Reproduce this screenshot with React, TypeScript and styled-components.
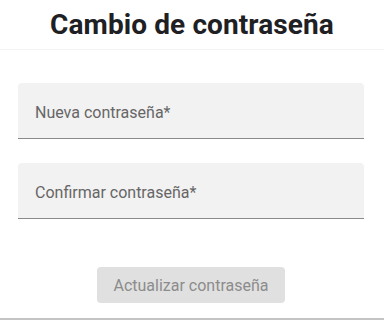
import React, { useState } from 'react';
import styled, { createGlobalStyle } from 'styled-components';

const GlobalStyle = createGlobalStyle`
  html, body {
    margin: 0;
    padding: 0;
    background: #fff;
    font-family: Roboto, "Liberation Sans", Arial, sans-serif;
  }
`;

const Page = styled.div`
  width: 384px;
  height: 329px;
  display: flex;
  flex-direction: column;
  box-sizing: border-box;
`;

const Header = styled.header`
  height: 49px;
  border-bottom: 1px solid #f3f3f3;
  display: flex;
  justify-content: center;
`;

const Title = styled.h1`
  margin: 0;
  font-size: 28px;
  line-height: 50px;
  font-weight: 700;
  color: #1e2024;
  letter-spacing: 0.1px;
`;

const Form = styled.form`
  flex: 1;
  display: flex;
  flex-direction: column;
  padding: 33px 20px 0 18px;
  gap: 24px;
  border-bottom: 2px solid #c4c4c4;
  margin-bottom: 9px;
`;

const Field = styled.label`
  position: relative;
  display: block;
  height: 56px;
  background: #f2f2f2;
  border-radius: 4px 4px 0 0;
  border-bottom: 1px solid #8a8a8a;
  box-sizing: border-box;
`;

const FieldLabel = styled.span`
  position: absolute;
  left: 17px;
  top: 18px;
  font-size: 16px;
  line-height: 23px;
  color: #666;
  pointer-events: none;
`;

const Input = styled.input`
  width: 100%;
  height: 100%;
  border: 0;
  outline: none;
  background: transparent;
  box-sizing: border-box;
  padding: 25px 17px 8px;
  font: inherit;
  font-size: 16px;
`;

const Actions = styled.div`
  display: flex;
  justify-content: center;
  padding-top: 24px;
`;

const Button = styled.button`
  height: 36px;
  width: 188px;
  border: 0;
  border-radius: 4px;
  background: #e0e0e0;
  color: #8c8c8c;
  font-family: inherit;
  font-size: 16px;
  padding: 0;
  cursor: default;
`;

const PasswordField: React.FC<{ label: string; value: string; onChange: (v: string) => void }> = ({ label, value, onChange }) => (
  <Field>
    {!value && <FieldLabel>{label}</FieldLabel>}
    <Input type="password" value={value} onChange={e => onChange(e.target.value)} />
  </Field>
);

const App: React.FC = () => {
  const [pass, setPass] = useState('');
  const [confirm, setConfirm] = useState('');

  return (
    <>
      <GlobalStyle />
      <Page>
        <Header>
          <Title>Cambio de contraseña</Title>
        </Header>
        <Form onSubmit={e => e.preventDefault()}>
          <PasswordField label="Nueva contraseña*" value={pass} onChange={setPass} />
          <PasswordField label="Confirmar contraseña*" value={confirm} onChange={setConfirm} />
          <Actions>
            <Button type="submit" disabled>Actualizar contraseña</Button>
          </Actions>
        </Form>
      </Page>
    </>
  );
};

export default App;
